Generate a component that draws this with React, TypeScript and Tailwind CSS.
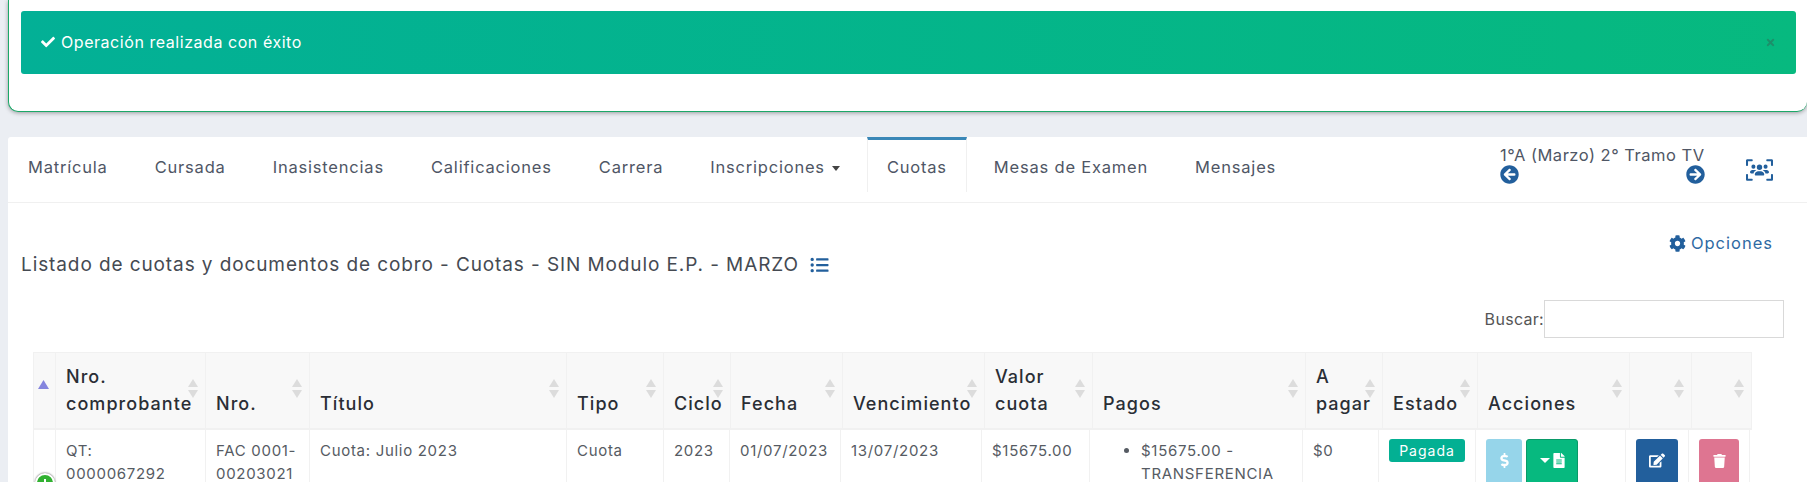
import {
  FaArrowCircleLeft,
  FaArrowCircleRight,
  FaCheck,
  FaCog,
  FaDollarSign,
  FaEdit,
  FaFileAlt,
  FaListUl,
  FaTimes,
  FaTrash,
} from 'react-icons/fa';
import { FaUsersViewfinder } from 'react-icons/fa6';

const font = { fontFamily: '"Inter", "Noto Sans", sans-serif' };

const tabs = ['Matrícula', 'Cursada', 'Inasistencias', 'Calificaciones', 'Carrera', 'Inscripciones', 'Cuotas', 'Mesas de Examen', 'Mensajes'];

const headerCols = [
  { label: '', w: 'w-[22px]' },
  { label: 'Nro. comprobante', w: 'w-[150px]' },
  { label: 'Nro.', w: 'w-[104px]' },
  { label: 'Título', w: 'w-[257px]' },
  { label: 'Tipo', w: 'w-[97px]' },
  { label: 'Ciclo', w: 'w-[67px]' },
  { label: 'Fecha', w: 'w-[112px]' },
  { label: 'Vencimiento', w: 'w-[142px]' },
  { label: 'Valor cuota', w: 'w-[108px]' },
  { label: 'Pagos', w: 'w-[213px]' },
  { label: 'A pagar', w: 'w-[77px]' },
  { label: 'Estado', w: 'w-[95px]' },
  { label: 'Acciones', w: 'w-[152px]' },
  { label: '', w: 'w-[62px]' },
  { label: '', w: 'w-[60px]' },
];

const bodyWidths = ['w-[22px]', 'w-[150px]', 'w-[104px]', 'w-[257px]', 'w-[97px]', 'w-[66px]', 'w-[111px]', 'w-[141px]', 'w-[108px]', 'w-[213px]', 'w-[76px]', 'w-[97px]', 'w-[150px]', 'w-[63px]', 'w-[61px]'];

const SortArrows = () => (
  <svg className="absolute right-[7px] top-[26px]" width="10" height="20" viewBox="0 0 10 20">
    <path d="M5 0l5 8H0z" fill="#dcdcdc" />
    <path d="M0 11h10l-5 8z" fill="#dcdcdc" />
  </svg>
);

const Td = ({ children }: { children?: React.ReactNode }) => (
  <td className="border-r border-[#f1f1f1] px-[10px] pt-[9px] align-top">{children}</td>
);

export default function App() {
  return (
    <div className="h-[482px] w-[1807px] overflow-hidden bg-[#ebeef3]" style={font}>
      <div className="ml-2 h-[112px] rounded-bl-[10px] rounded-br-[10px] border-b border-l border-[#1ba868] bg-white pl-[12px] pr-[11px] pt-[11px] shadow-[0_1px_4px_rgba(0,0,0,0.35)]">
        <div className="flex h-[63px] items-center justify-between rounded-[3px] bg-linear-to-r from-[#03b096] to-[#07b97f] pl-5 pr-[20px] text-white">
          <div className="mb-[2px] flex items-center gap-[6px] text-[16px] tracking-[0.55px]">
            <FaCheck className="h-[14px] w-[14px]" />
            <span>Operación realizada con éxito</span>
          </div>
          <FaTimes className="h-[11px] w-[11px] text-[#1d8f6a]" />
        </div>
      </div>

      <div className="ml-2 mt-[25px] h-[345px] rounded-tl-[3px] bg-white">
        <div className="flex h-[66px] border-b border-[#f0f0f0]">
          <ul className="flex h-[55px] gap-[7px] text-[16.5px] tracking-[0.8px] text-[#4f5665]">
            {tabs.map((t) => (
              <li
                key={t}
                className={
                  t === 'Cuotas'
                    ? 'flex items-center border-x border-t-[3px] border-x-[#f0f0f0] border-t-[#3a87b7] px-[19px] pt-[2px]'
                    : 'flex items-center px-[20px] pt-[5px]'
                }
              >
                {t}
                {t === 'Inscripciones' && (
                  <span className="ml-[7px] mt-[2px] h-0 w-0 border-x-[4.5px] border-t-[5px] border-x-transparent border-t-[#444]" />
                )}
              </li>
            ))}
          </ul>
          <div className="ml-auto flex pr-[34px] pt-[9px]">
            <div className="w-[205px]">
              <div className="h-[19px] whitespace-nowrap text-[16.5px] leading-[19px] tracking-[0.5px] text-[#4f5665]">1°A (Marzo) 2° Tramo TV</div>
              <div className="flex justify-between text-[#225f9c]">
                <FaArrowCircleLeft className="h-[19px] w-[19px]" />
                <FaArrowCircleRight className="h-[19px] w-[19px]" />
              </div>
            </div>
            <FaUsersViewfinder className="ml-[41px] mt-[12px] h-[24px] w-[27px] text-[#225f9c]" />
          </div>
        </div>

        <div className="flex h-[97px] items-start justify-between pl-[13px] pr-[34px]">
          <div className="mt-[48px] flex items-center gap-[11px] whitespace-nowrap text-[19px] leading-[27px] tracking-[0.9px] text-[#454a52]">
            <span>Listado de cuotas y documentos de cobro - Cuotas - SIN Modulo E.P. - MARZO</span>
            <FaListUl className="h-[18px] w-[19px] text-[#225f9c]" />
          </div>
          <div className="mt-[28px] flex items-center gap-[5px] text-[16.5px] tracking-[1px] text-[#2f6aa3]">
            <FaCog className="h-[17px] w-[17px] text-[#225f9c]" />
            <span>Opciones</span>
          </div>
        </div>

        <div className="flex h-[38px] items-center justify-end pr-[23px] text-[16px] tracking-[0.3px] text-[#555]">
          <span>Buscar:</span>
          <div className="h-[38px] w-[240px] border border-[#d9d9d9] bg-white" />
        </div>

        <table className="ml-[25px] mt-[14px] w-[1718px] table-fixed border-collapse bg-[#f8f8f8]">
          <colgroup>
            {headerCols.map((c, i) => (
              <col key={i} className={c.w} />
            ))}
          </colgroup>
          <thead>
            <tr className="h-[76px] border-y border-[#f1f1f1] border-b-2">
              {headerCols.map((c, i) => (
                <th key={i} className="relative border-x border-[#f1f1f1] px-[10px] pb-[11px] text-left align-bottom text-[18px] font-medium leading-[27px] tracking-[1.05px] text-[#2a2e35]">
                  {i === 0 ? (
                    <svg className="absolute left-[4px] top-[27px]" width="11" height="10" viewBox="0 0 11 10">
                      <path d="M5.5 0L11 9H0z" fill="#8585de" />
                    </svg>
                  ) : (
                    <SortArrows />
                  )}
                  {c.label}
                </th>
              ))}
            </tr>
          </thead>
        </table>

        <table className="ml-[25px] w-[1716px] table-fixed border-collapse text-[15px] leading-[23px] tracking-[0.7px] text-[#565b63]">
          <colgroup>
            {bodyWidths.map((w, i) => (
              <col key={i} className={w} />
            ))}
          </colgroup>
          <tbody>
            <tr className="h-[60px]">
              <td className="relative border-x border-[#f1f1f1]">
                <span className="absolute left-[1px] top-[43px] flex h-5 w-5 items-center justify-center rounded-full border-2 border-white bg-[#31b131] shadow-[0_0_2px_#444]">
                  <span className="h-[2px] w-2 bg-white" />
                  <span className="absolute h-2 w-[2px] bg-white" />
                </span>
              </td>
              <Td>
                QT:
                <br />
                0000067292
              </Td>
              <Td>FAC 0001-00203021</Td>
              <Td>Cuota: Julio 2023</Td>
              <Td>Cuota</Td>
              <Td>2023</Td>
              <Td>01/07/2023</Td>
              <Td>13/07/2023</Td>
              <Td>$15675.00</Td>
              <Td>
                <ul className="list-disc pl-[41px]">
                  <li>$15675.00 - TRANSFERENCIA</li>
                </ul>
              </Td>
              <Td>$0</Td>
              <Td>
                <span className="flex h-[23px] w-[76px] items-center justify-center rounded-[3px] bg-[#03b093] text-[14px] tracking-[1px] text-white">Pagada</span>
              </Td>
              <Td>
                <div className="flex gap-[4px]">
                  <span className="flex h-[50px] w-[36px] items-center justify-center rounded-[3px] bg-[#96d5ea] pb-[6px] text-white">
                    <FaDollarSign className="h-[15px] w-[15px]" />
                  </span>
                  <span className="flex h-[50px] w-[52px] items-center justify-center gap-[3px] rounded-[3px] border border-[#0a9a68] bg-[#07b97f] pb-[6px] text-white">
                    <span className="h-0 w-0 border-x-[5px] border-t-[5px] border-x-transparent border-t-white" />
                    <FaFileAlt className="h-[15px] w-[12px]" />
                  </span>
                </div>
              </Td>
              <Td>
                <span className="flex h-[50px] w-[42px] items-center justify-center rounded-[3px] bg-[#225f9c] pb-[6px] text-white">
                  <FaEdit className="h-[15px] w-[16px]" />
                </span>
              </Td>
              <Td>
                <span className="flex h-[50px] w-[40px] items-center justify-center rounded-[3px] bg-[#de7591] pb-[6px] text-white">
                  <FaTrash className="h-[14px] w-[13px]" />
                </span>
              </Td>
            </tr>
          </tbody>
        </table>
      </div>
    </div>
  );
}
